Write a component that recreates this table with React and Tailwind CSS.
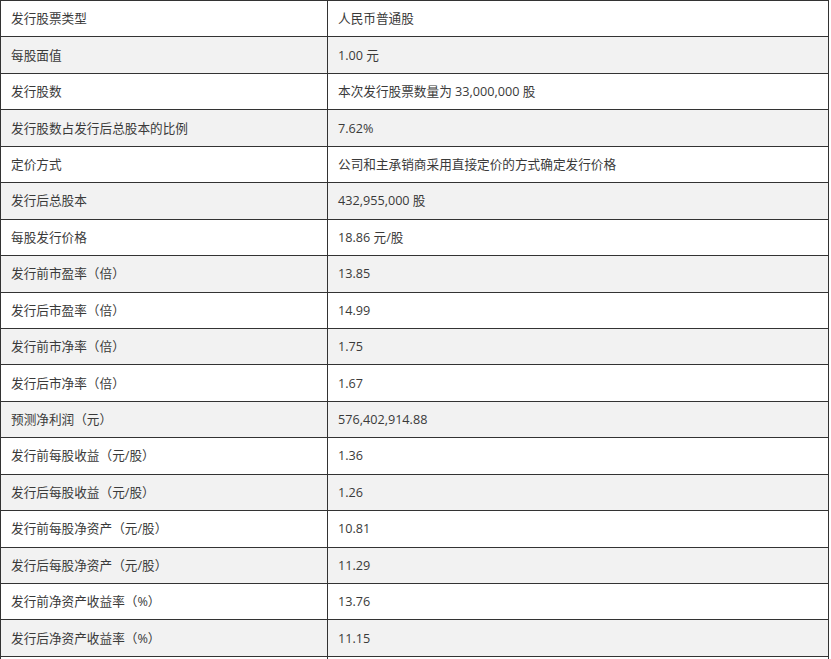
import React from "react";

const rows = [
  ["发行股票类型", "人民币普通股"],
  ["每股面值", "1.00 元"],
  ["发行股数", "本次发行股票数量为 33,000,000 股"],
  ["发行股数占发行后总股本的比例", "7.62%"],
  ["定价方式", "公司和主承销商采用直接定价的方式确定发行价格"],
  ["发行后总股本", "432,955,000 股"],
  ["每股发行价格", "18.86 元/股"],
  ["发行前市盈率（倍）", "13.85"],
  ["发行后市盈率（倍）", "14.99"],
  ["发行前市净率（倍）", "1.75"],
  ["发行后市净率（倍）", "1.67"],
  ["预测净利润（元）", "576,402,914.88"],
  ["发行前每股收益（元/股）", "1.36"],
  ["发行后每股收益（元/股）", "1.26"],
  ["发行前每股净资产（元/股）", "10.81"],
  ["发行后每股净资产（元/股）", "11.29"],
  ["发行前净资产收益率（%）", "13.76"],
  ["发行后净资产收益率（%）", "11.15"],
  ["", ""],
];

export default function App() {
  return (
    <div className="h-[659px] w-[831px] overflow-hidden bg-white">
      <div
        className="w-[829px] border-t border-l border-r border-[#333333] text-[12.65px] text-[#3a3a3a]"
        style={{ fontFamily: '"Open Sans", "Noto Sans CJK SC", sans-serif' }}
      >
        {rows.map(([k, v], i) => (
          <div
            key={i}
            className={`flex h-[36.45px] border-b border-[#333333] ${i % 2 === 1 ? "bg-[#f2f2f2]" : "bg-white"}`}
          >
            <div className="flex w-[327px] shrink-0 items-center border-r border-[#333333] px-[10px]">
              {k}
            </div>
            <div className="flex flex-1 items-center px-[10px]">{v}</div>
          </div>
        ))}
      </div>
    </div>
  );
}
